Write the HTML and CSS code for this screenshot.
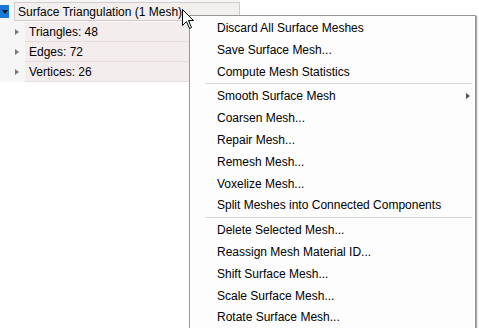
FILE: index.html
```html
<!DOCTYPE html>
<html>
<head>
<meta charset="utf-8">
<link rel="stylesheet" href="styles.css">
</head>
<body>
<div class="tree">
  <div class="row root">
    <span class="exp"><span class="down"></span></span>
    <span class="label sel">Surface Triangulation (1 Mesh)</span>
  </div>
  <div class="row child"><span class="tri"></span><span class="label">Triangles: 48</span></div>
  <div class="row child"><span class="tri"></span><span class="label">Edges: 72</span></div>
  <div class="row child"><span class="tri"></span><span class="label">Vertices: 26</span></div>
</div>

<div class="menu">
  <div class="item">Discard All Surface Meshes</div>
  <div class="item">Save Surface Mesh...</div>
  <div class="item">Compute Mesh Statistics</div>
  <div class="sep"></div>
  <div class="item sub">Smooth Surface Mesh<span class="arrow"></span></div>
  <div class="item">Coarsen Mesh...</div>
  <div class="item">Repair Mesh...</div>
  <div class="item">Remesh Mesh...</div>
  <div class="item">Voxelize Mesh...</div>
  <div class="item">Split Meshes into Connected Components</div>
  <div class="sep"></div>
  <div class="item">Delete Selected Mesh...</div>
  <div class="item">Reassign Mesh Material ID...</div>
  <div class="item">Shift Surface Mesh...</div>
  <div class="item">Scale Surface Mesh...</div>
  <div class="item">Rotate Surface Mesh...</div>
</div>

<svg class="cursor" width="13" height="21" viewBox="0 0 13 21">
  <path d="M0.5,0.5 L0.5,16.5 L4.5,12.5 L7.5,19.5 L9.5,18.5 L6.5,11.5 L11.5,11.5 Z" fill="#fff" stroke="#000" stroke-width="1" stroke-linejoin="miter"/>
</svg>
</body>
</html>
```

FILE: styles.css
```css
html, body {
  margin: 0;
  padding: 0;
  background: #ffffff;
}
body {
  font-family: "Liberation Sans", Arial, sans-serif;
  font-size: 12px;
  color: #000;
  width: 479px;
  height: 328px;
  overflow: hidden;
  position: relative;
}
.tree {
  width: 240px;
  background: #f6f6f6;
}
.row {
  display: flex;
  align-items: center;
  box-sizing: border-box;
}
.root {
  height: 22px;
  padding-top: 1px;
}
.exp {
  width: 9px;
  height: 13px;
  background: #1a78d4;
  display: flex;
  align-items: center;
  justify-content: center;
  margin-right: 5px;
}
.down {
  width: 0;
  height: 0;
  border-left: 3px solid transparent;
  border-right: 3px solid transparent;
  border-top: 4px solid #101820;
}
.label.sel {
  flex: 1;
  height: 19px;
  box-sizing: border-box;
  border: 1px solid #d2cccc;
  background: #f4efef;
  padding-left: 3px;
  display: flex;
  align-items: center;
}
.child {
  height: 20px;
  padding-left: 15px;
}
.tri {
  width: 0;
  height: 0;
  border-top: 3.5px solid transparent;
  border-bottom: 3.5px solid transparent;
  border-left: 4px solid #7a7a7a;
  margin-right: 6px;
}
.child .label {
  flex: 1;
  height: 20px;
  box-sizing: border-box;
  border-bottom: 1px solid #e6dcdc;
  background: #f3eded;
  padding-left: 4px;
  display: flex;
  align-items: center;
}

.menu {
  position: absolute;
  left: 189px;
  top: 15px;
  width: 287px;
  box-sizing: border-box;
  background: #fdfdfd;
  border: 1px solid #979797;
  padding: 1px 0 0;
  box-shadow: 1px 1px 1px rgba(0,0,0,0.35);
}
.item {
  height: 21.8px;
  line-height: 22.6px;
  padding-left: 27px;
  position: relative;
  white-space: nowrap;
}
.sep {
  height: 1px;
  background: #d7d7d7;
  margin: 1px 3px 1px 15px;
}
.arrow {
  position: absolute;
  right: 5px;
  top: 8px;
  width: 0;
  height: 0;
  border-top: 3.5px solid transparent;
  border-bottom: 3.5px solid transparent;
  border-left: 4px solid #555;
}
.cursor {
  position: absolute;
  left: 182px;
  top: 9px;
}
```
